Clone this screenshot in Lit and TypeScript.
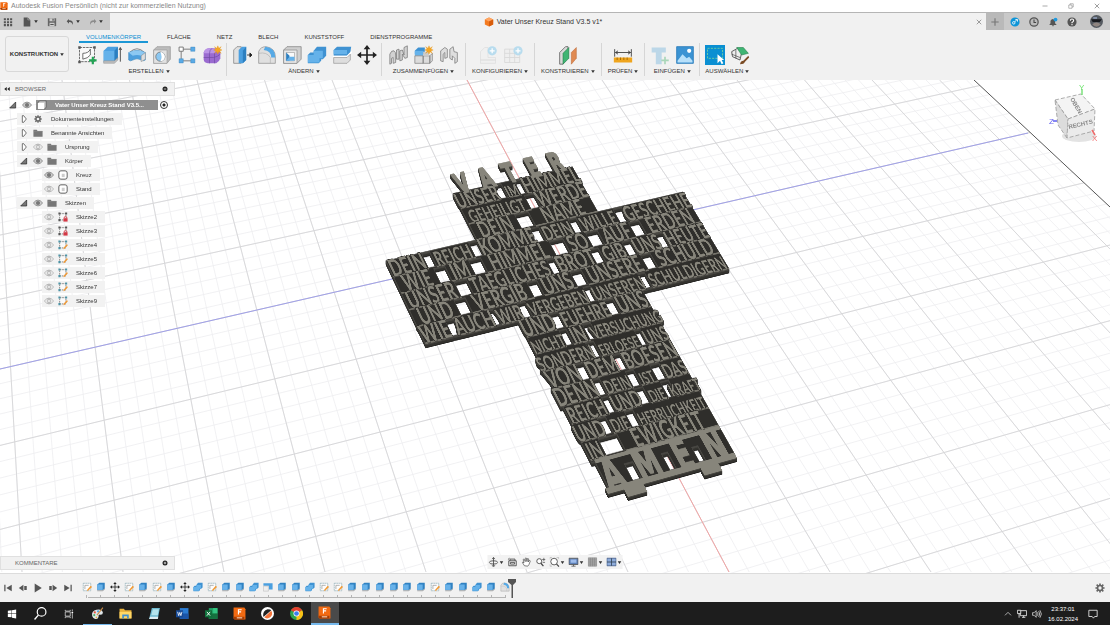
import { LitElement, html, svg, css } from "lit";
import { customElement } from "lit/decorators.js";
import { styleMap } from "lit/directives/style-map.js";

type Pt = [number, number];

const caret = html`<svg class="caret" viewBox="0 0 6 5"><path d="M0 .5h6L3 5z" fill="#333" /></svg>`;

const sunburst = (x: number, y: number) => svg`
  <path transform="translate(${x} ${y})" fill="#f5a623" stroke="#e8920c" stroke-width=".4"
    d="M0-5 1.2-2 4-4 2.2-1.2 5 0 2.2 1.2 4 4 1.2 2 0 5-1.2 2-4 4-2.2 1.2-5 0-2.2-1.2-4-4-1.2-2z" />`;

const glyphs: Record<string, unknown> = {
  sketch: svg`<path d="M3 3h18v17H3z" fill="#f8f8f8" stroke="#555" stroke-dasharray="3 1"/>
    <g fill="#555"><path d="M1.500 1.500h3v3h-3zM19.500 1.500h3v3h-3zM1.500 19h3v3h-3z"/></g>
    <path d="M7 17V10q7 0 9-5v7q-3 4-9 5z" fill="#fff" stroke="#555"/>
    <path d="M19 14v9M14.500 18.500h9" stroke="#23a455" stroke-width="2.600"/>`,
  extrude: svg`<path d="M2 7 7 2h12v14l-4 5H2z" fill="#4a9fe0"/><path d="M2 7h13v12H2z" fill="#65b2ea"/>
    <path d="M15 7l4-5v14l-4 4z" fill="#2c7fc0"/><path d="M2 19h13l4-4v3l-4 4H2z" fill="#bdbdbd" stroke="#888" stroke-width=".5"/>
    <path d="M22 20V4M20.500 6 22 3l1.500 3" stroke="#333" fill="none"/>`,
  revolve: svg`<path d="M3 9Q12 0 21 9" fill="none" stroke="#555" stroke-width=".8"/><path d="M2 9q10-5 20 0v9q-3 2-5 0-5-3-10 0-3 2-5 0z" fill="#4d9fdd" stroke="#2d7ab3" stroke-width=".6"/>
    <path d="M2 9q10-5 20 0l-5 4q-5-2-10 0z" fill="#8cc8f2"/><path d="M17 13l5-4v8l-5 3z" fill="#ddd" stroke="#888" stroke-width=".6"/>`,
  hole: svg`<path d="M2 6 6 2h16v15l-4 5H2z" fill="#bcbcbc" stroke="#888" stroke-width=".7"/><path d="M2 6h16v16H2z" fill="#e2e2e2" stroke="#999" stroke-width=".7"/>
    <circle cx="10" cy="14" r="5.500" fill="#8cc8f2" stroke="#777"/><path d="M10 8.500a5.500 5.500 0 0 1 0 11q3-5 0-11z" fill="#fff"/>`,
  pattern: svg`<path d="M5 5v14h14M5 5h14" fill="none" stroke="#666"/><g fill="#5aabe6" stroke="#3781b8" stroke-width=".5">
    <path d="M16.500 2.500h5v5h-5zM16.500 16.500h5v5h-5zM2.500 16.500h5v5h-5z"/></g><path d="M2.500 2.500h5v5h-5z" fill="#fff" stroke="#666"/>`,
  form: svg`<path d="M2 9q1-4 6-5h8q5 1 6 5v7q-1 4-5 6H7q-5-1-5-5z" fill="#9a6bd0"/><path d="M2 9q1-4 6-5h8q3 1 4 3l-6 3H3z" fill="#bb94e6"/>
    <path d="M12 4q-3 2-3 6v12M2 15h12q5-1 8-4M15 10v12" fill="none" stroke="#704aa3" stroke-width=".8"/>${sunburst(19, 6)}`,
  press: svg`<path d="M2 6 6 2h5v20H2z" fill="#e0e0e0" stroke="#777" stroke-width=".8"/><path d="M8 6l4-4h5v16l-4 4H8z" fill="#4a9fe0"/><path d="M13 7l4-5v16l-4 4z" fill="#2c7fc0"/>
    <path d="M18 12h5M21.500 9.500 24 12l-2.500 2.500z" stroke="#222" fill="#222"/>`,
  fillet: svg`<path d="M2 22V8q2-6 9-6 11 2 11 12v8z" fill="#e0e0e0" stroke="#888" stroke-width=".8"/><path d="M10 2q12 1 12 13h-5Q17 7 8 6z" fill="#56a9e5"/><path d="M2 10q10-2 14 5v7" fill="none" stroke="#aaa" stroke-width=".7"/>`,
  shell: svg`<path d="M2 6 6 2h17v15l-5 5H2z" fill="#cfcfcf" stroke="#777" stroke-width=".8"/><path d="M2 6h16v16H2z" fill="#e9e9e9" stroke="#888" stroke-width=".8"/>
    <path d="M5 9h10v10H5z" fill="#fafafa" stroke="#888" stroke-width=".6"/><path d="M5 9l4 4v6H5z" fill="#2c7fc0"/><path d="M5 19l4-5h6v5z" fill="#65b2ea"/>`,
  combine: svg`<path d="M8 7l4-5h11v11l-4 4h-2v2l-3 3H1V12l3-3h4z" fill="#3f92d2"/><path d="M8 7h11v9h-4v5H1v-9h7z" fill="#65b2ea"/>`,
  split: svg`<path d="M2 6l4-4h17l-1 7-4 4H2z" fill="#3f92d2"/><path d="M2 6h16v5H2z" fill="#65b2ea"/><path d="M1 14h17l6-6" stroke="#fff" stroke-width="2" fill="none"/>
    <path d="M2 15h16l4-4v7l-4 4H2z" fill="#dedede" stroke="#888" stroke-width=".7"/>`,
  move: svg`<path d="M12 3v18M3 12h18" stroke="#222" stroke-width="2"/><path d="M12 0l4 5H8zM12 24l4-5H8zM0 12l5-4v8zM24 12l-5-4v8z" fill="#222"/>`,
  joint: svg`<g fill="#d2d2d2" stroke="#777" stroke-width=".9"><path d="M1 23V11q2-5 5-4 2 1 2 5v9l-3 1v-7l-2 1v6z"/><path d="M9 17V6l3-1v12zM13 19V7l3-1 2 6V3l4-2v14l-3 1-3-5v7z"/></g>`,
  newcomp: svg`<path d="M1 7l4-4h8v8H1z" fill="#3f92d2"/><path d="M1 7h10v6H1z" fill="#65b2ea"/><path d="M1 13h10v9H1zM11 13h8v9h-8zM19 13l3-3v9l-3 3z" fill="#dcdcdc" stroke="#777" stroke-width=".8"/><path d="M11 8h7v5h-7z" fill="#ccc"/>${sunburst(18, 6)}`,
  rigid: svg`<g fill="#dedede" stroke="#777" stroke-width=".9"><path d="M2 19V7l5-4 3 2v10l-3 1V9l-2 2v9z"/><path d="M13 16V5l4-3 1 6 4 1v11l-3 2v-6l-3-3v5z"/></g>`,
  config1: svg`<g opacity=".3"><path d="M3 22V8l5-5h4v12h9v7z" fill="#eee" stroke="#bbb"/><path d="M3 18h18" stroke="#999"/></g><circle cx="17" cy="7" r="5.500" fill="#b8dcee"/><path d="M17 4v6M14 7h6" stroke="#fff" stroke-width="1.500"/>`,
  config2: svg`<g opacity=".35"><path d="M2 5h18v16H2zM2 10h18M8 5v16M14 5v16M2 15h18" fill="#eee" stroke="#aaa"/></g><circle cx="18" cy="7" r="5.500" fill="#b8dcee"/><path d="M18 4v6M15 7h6" stroke="#fff" stroke-width="1.500"/>`,
  plane: svg`<path d="M2 9l7-7h3v13l-6 8H2z" fill="#d9d9d9" stroke="#555" stroke-width=".9"/><path d="M6 10l7-7v13l-7 7z" fill="#3fb573" stroke="#267e4c" stroke-width=".7"/><path d="M16 9l6-6v13l-6 7z" fill="#e08a52" stroke="#b7632e" stroke-width=".6"/>`,
  measure: svg`<path d="M2 5v9M22 5v9M3 9h18M6 7 3 9l3 2M18 7l3 2-3 2" fill="none" stroke="#333"/><path d="M1 15h22v6H1z" fill="#efa51e"/><path d="M5 15v3M9 15v3M13 15v3M17 15v3" stroke="#9c6400"/>`,
  insert: svg`<g opacity=".5"><path d="M2 3h17v6h-5v14H7V9H2z" fill="#89bfe0"/><path d="M18 14v9M13.500 18.500h9" stroke="#64bd82" stroke-width="2"/></g>`,
  picture: svg`<path d="M2 2h20v20H2z" fill="#3b93d3" stroke="#2b7cb9"/><path d="M3 19l6-8 5 5 3-2 4 5v2H3z" fill="#b7e0fa"/><circle cx="17" cy="7" r="2.500" fill="#fff"/>`,
  select: svg`<path d="M0 0h24v24H0z" fill="#0a8fd2"/><path d="M3 4h18v12H3z" fill="none" stroke="#7ad49b" stroke-dasharray="2.500 1.500"/><path d="M15 11v11l3-3 2 4 2-1-2-4h3z" fill="#fff"/>`,
  paint: svg`<path d="M2 8l7-4 5 5-2 9-9-4z" fill="#eee" stroke="#444"/><path d="M8 3h8l6 7-8 2z" fill="#3fb573" stroke="#267e4c" stroke-width=".7"/><path d="M2 11l10 4M7 6v10" stroke="#444" stroke-width=".8"/><path d="M22 13l-6 6q-3 0-4 4 5 0 6-3l5-5z" fill="#7a4b25"/>`,
  grid: svg`<g fill="#555"><path d="M2 3h5v5H2zM9.500 3h5v5h-5zM17 3h5v5h-5zM2 10h5v5H2zM9.500 10h5v5h-5zM17 10h5v5h-5zM2 17h5v5H2zM9.500 17h5v5h-5zM17 17h5v5h-5z"/></g>`,
  file: svg`<path d="M4 1h10l6 6v16H4z" fill="#555"/><path d="M14 1v6h6" fill="none" stroke="#ddd"/>`,
  save: svg`<path d="M2 3h20v19H2z" fill="#666"/><path d="M6 3h12v7H6zM6 14h12v8H6z" fill="#ccc"/><path d="M13 4h3v5h-3zM8 17h8v2H8z" fill="#555"/>`,
  undo: svg`<path d="M9 3 2 10l7 7v-5q9-1 11 9 4-14-11-14z" fill="#555"/>`,
  redo: svg`<path d="M15 3l7 7-7 7v-5Q6 11 4 21 0 7 15 7z" fill="#8c8c8c"/>`,
  cube: svg`<path d="M12 1l10 5v12l-10 5L2 18V6z" fill="#f47b20"/><path d="M12 1l10 5-10 5L2 6z" fill="#ffa562"/><path d="M12 11l10-5v12l-10 5z" fill="#d75c0b"/>`,
  fusion: svg`<path d="M1 1h20l2 3v19H3l-2-2z" fill="#f26a12"/><path d="M1 18h20v5H3l-2-2z" fill="#a53c03"/><path d="M9 14V4h7v2h-5v2h4v2h-4v4z" fill="#fff"/><path d="M7 19h10v2H7z" fill="#ffd9bd"/>`,
  eye: svg`<path d="M1 12q11-14 22 0-11 14-22 0z" fill="#ccc" stroke="#777" stroke-width="1.800"/><circle cx="12" cy="12" r="5" fill="#777"/>`,
  eyeoff: svg`<path d="M1 12q11-14 22 0-11 14-22 0z" fill="#f6f6f6" stroke="#999" stroke-width="1.600"/><circle cx="12" cy="12" r="4.500" fill="none" stroke="#999" stroke-width="1.600"/><path d="M12 5v14" stroke="#999"/>`,
  folder: svg`<path d="M1 4h8l2 3h12v14H1z" fill="#777"/><path d="M1 8h22" stroke="#999"/>`,
  gear: svg`<path d="M12 1v22M1 12h22M4 4l16 16M20 4 4 20" stroke="#666" stroke-width="4"/><circle cx="12" cy="12" r="8" fill="#666"/><circle cx="12" cy="12" r="4" fill="#f2f2f2"/>`,
  open: svg`<path d="M20 3v18H2z" fill="#777" stroke="#222" stroke-width="2"/>`,
  closed: svg`<path d="M7 2v20h4l8-10-8-10z" fill="#fff" stroke="#333" stroke-width="2"/>`,
  body: svg`<rect x="2" y="2" width="20" height="20" rx="5" fill="#fff" stroke="#444" stroke-width="2"/><path d="M9 9h7v8H9z" fill="#ccc"/>`,
  comp: svg`<path d="M2 7l4-5h16v15l-4 5H2z" fill="#c9c9c9" stroke="#444" stroke-width="1.500"/><path d="M2 7h15v15H2z" fill="#fff"/>`,
  sk: svg`<path d="M4 4h15v15H4z" fill="#fafafa" stroke="#555" stroke-width="1.600" stroke-dasharray="4 2"/><g fill="#4c93a6"><path d="M1 1h5v5H1zM17 1h5v5h-5zM1 17h5v5H1z"/></g><path d="M13 22l1-4 7-8 3 2-8 9z" fill="#f29a35"/>`,
  sklock: svg`<path d="M4 4h15v15H4z" fill="#fafafa" stroke="#555" stroke-width="1.600" stroke-dasharray="4 2"/><g fill="#555"><path d="M1 1h5v5H1zM17 1h5v5h-5zM1 17h5v5H1z"/></g><path d="M13 15h10v8H13z" fill="#d43845"/><path d="M15 15v-3q3-3 6 0v3" fill="none" stroke="#d43845" stroke-width="2"/>`,
  tsketch: svg`<path d="M3 3h18v18H3z" fill="#fcfcfc" stroke="#7fa0ac" stroke-width="1.500" stroke-dasharray="4 1"/><path d="M7 17V8h9" fill="none" stroke="#888" stroke-width="1.500"/><path d="M12 22l1-4 8-9 3 3-8 8z" fill="#f29a35"/>`,
  textrude: svg`<path d="M3 6l5-4h13v14l-4 4H3z" fill="#3182c2"/><path d="M3 6h13v13H3z" fill="#68b2ea"/><path d="M3 20h13l5-5v3l-5 4H3z" fill="#aaa"/>`,
  tshell: svg`<path d="M1 3h22v15h-9V9H1z" fill="#4a9fe0"/><path d="M1 10h12v12H1z" fill="#eee" stroke="#aaa"/>`,
  first: svg`<path d="M3 4h3v16H3zM21 4v16L8 12z" fill="#555"/>`,
  prev: svg`<path d="M2 12 13 4v16zM15 7h6v10h-6z" fill="#555"/>`,
  play: svg`<path d="M4 1l17 11L4 23z" fill="#555"/>`,
  next: svg`<path d="M22 12 11 4v16zM3 7h6v10H3z" fill="#555"/>`,
  last: svg`<path d="M18 4h3v16h-3zM3 4v16l13-8z" fill="#555"/>`,
  orbit: svg`<path d="M12 2v20M9 5l3-4 3 4" stroke="#444" stroke-width="2" fill="none"/><ellipse cx="12" cy="13" rx="10" ry="4" fill="none" stroke="#444" stroke-width="2"/><path d="M8 20l4 3 4-3" fill="none" stroke="#444" stroke-width="2"/>`,
  look: svg`<path d="M3 9h18v12H3zM6 9V5h12v4M7 13h10v4H7z" fill="#eee" stroke="#444" stroke-width="2"/><path d="M1 6l4-3" stroke="#444" stroke-width="2"/>`,
  hand: svg`<path d="M7 21 2 13q1-2 4 1L4 6q2-2 3 0l2 5V3q2-2 3 0l1 8 1-7q3-1 3 1l-1 7 3-4q2 0 2 2l-3 8-3 4z" fill="#fff" stroke="#444" stroke-width="1.600"/>`,
  zoom: svg`<circle cx="9" cy="10" r="6" fill="#fff" stroke="#444" stroke-width="2"/><path d="M13 15l6 7" stroke="#444" stroke-width="3"/><path d="M20 2v8M16 6h8M17 13h6" stroke="#444" stroke-width="1.600"/>`,
  fit: svg`<circle cx="11" cy="11" r="8" fill="#fff" stroke="#444" stroke-width="2"/><path d="M17 17l6 6" stroke="#444" stroke-width="3"/><path d="M1 6V1h5M17 1h5v4M1 17v5h5" stroke="#888" fill="none"/>`,
  monitor: svg`<path d="M1 3h22v15H1z" fill="#5d7fb5" stroke="#555" stroke-width="2"/><path d="M5 6h14v8H5z" fill="#9ebcec"/><path d="M7 22h10M12 18v4" stroke="#555" stroke-width="2"/>`,
  gridset: svg`<path d="M2 2h20v20H2z" fill="#aaa" stroke="#666"/><path d="M2 7h20M2 12h20M2 17h20M7 2v20M12 2v20M17 2v20" stroke="#777"/>`,
  views: svg`<path d="M1 3h22v18H1z" fill="#8eacdb" stroke="#465f8c" stroke-width="2"/><path d="M12 3v18M1 12h22" stroke="#345" stroke-width="2"/>`,
  ext: svg`<circle cx="12" cy="12" r="11" fill="#0d95d8"/><circle cx="9" cy="14" r="3" fill="none" stroke="#fff" stroke-width="2"/><path d="M13 6h5v5M11 12l5-5" stroke="#fff" stroke-width="2" fill="none"/>`,
  clock: svg`<circle cx="12" cy="12" r="10" fill="#bbb" stroke="#555" stroke-width="3"/><path d="M12 6v7h5" fill="none" stroke="#444" stroke-width="2.500"/>`,
  bell: svg`<path d="M3 19l3-4V9q5-9 11 0v6l4 4zM9 20h6l-3 3z" fill="#555"/><circle cx="18" cy="6" r="4.500" fill="#1c9ae0"/>`,
  help: svg`<circle cx="12" cy="12" r="11" fill="#555"/><path d="M8 9q0-4 4-4t4 4q0 2-4 4v2M12 17v3" fill="none" stroke="#fff" stroke-width="2.500"/>`,
  avatar: svg`<circle cx="12" cy="12" r="12" fill="#555a60"/><path d="M2 8h20l-4 5H5z" fill="#17191d"/><path d="M4 17q8-6 16 0-8 9-16 0z" fill="#8f8580"/><path d="M6 4h7v3H6z" fill="#8d9cb8"/>`,
  win: svg`<path d="M2 4l9-1v8H2zM12 3l10-2v10H12zM2 12h9v8l-9-1zM12 12h10v11l-10-2z" fill="#fff"/>`,
  search: svg`<circle cx="14" cy="9" r="8" fill="none" stroke="#fff" stroke-width="2.200"/><path d="M8 15l-7 8" stroke="#fff" stroke-width="2.500"/>`,
  task: svg`<path d="M3 7h12v10H3zM3 2v3h12V2M3 22v-3h12v3M20 1v5M20 10v13" fill="none" stroke="#ddd" stroke-width="1.800"/><path d="M18 7h4v3h-4z" fill="#fff"/>`,
  palette: svg`<path d="M2 15Q1 7 10 5q10-2 12 5 0 5-6 4-3 1-2 4-1 5-6 4-5-1-6-7z" fill="#dfe6ea"/><circle cx="7" cy="10" r="2" fill="#e5533c"/><circle cx="13" cy="8" r="2" fill="#4aa3df"/><circle cx="6" cy="15" r="2" fill="#54b56b"/><circle cx="10" cy="19" r="1.600" fill="#e2b33b"/><path d="M22 1 11 15" stroke="#c98c48" stroke-width="2"/>`,
  explorer: svg`<path d="M1 3h8l2 3h12v15H1z" fill="#e9b13b"/><path d="M1 9h22v12H1z" fill="#ffd766"/><path d="M6 14h12v7h-3v-4H9v4H6z" fill="#3f8ed0"/>`,
  note: svg`<path d="M7 2h15l-4 20H2z" fill="#6eb9cf"/><path d="M9 4h11l-2 11H6z" fill="#b4e3ec"/><path d="M2 22h16l1-4H4z" fill="#dfeef2"/>`,
  word: svg`<path d="M7 2h16v20H7z" fill="#2b7cd3"/><path d="M7 12h16v10H7z" fill="#1b55a8"/><path d="M0 6h13v13H0z" fill="#174a96"/><path d="M3 9l2 7 2-6 2 6 2-7" fill="none" stroke="#fff" stroke-width="1.500"/>`,
  excel: svg`<path d="M7 2h16v20H7z" fill="#22a366"/><path d="M15 2h8v10h-8z" fill="#33c481"/><path d="M7 12h16v10H7z" fill="#15713f"/><path d="M0 6h13v13H0z" fill="#0f703b"/><path d="M3.500 9l6 7M9.500 9l-6 7" stroke="#fff" stroke-width="1.700"/>`,
  slicer: svg`<circle cx="12" cy="12" r="12" fill="#fff"/><path d="M4 17Q3 7 12 4q6 0 7 2L5 18z" fill="#222"/><path d="M19 7q4 7-2 12-6 4-11 0z" fill="#f4743b"/>`,
  chrome: svg`<circle cx="12" cy="12" r="12" fill="#2ea44f"/><path d="M12 12 1.600 6A12 12 0 0 1 22.400 6z" fill="#e4402f"/><path d="M12 12l10.400-6A12 12 0 0 1 12 24z" fill="#fbc116"/><circle cx="12" cy="12" r="5.500" fill="#fff"/><circle cx="12" cy="12" r="4.300" fill="#3b7ded"/>`,
  up: svg`<path d="M3 16l9-9 9 9" fill="none" stroke="#eee" stroke-width="2"/>`,
  net: svg`<path d="M8 4h15v12H8zM12 20h8M16 16v4" fill="none" stroke="#eee" stroke-width="2"/><path d="M1 3h8v8H1zM5 11v10" fill="#1d1d1d" stroke="#eee" stroke-width="2"/>`,
  sound: svg`<path d="M1 9h4l5-5v16l-5-5H1zM13 8q3 4 0 8M16 5q5 7 0 14M19 3q7 9 0 18" fill="none" stroke="#eee" stroke-width="1.700"/>`,
  notice: svg`<path d="M2 3h20v15h-6l-3 4-3-4H2z" fill="none" stroke="#eee" stroke-width="2"/>`,
  min: svg`<path d="M2 12h20" stroke="#777" stroke-width="2.500"/>`,
  restore: svg`<path d="M3 8h13v13H3zM8 8V3h13v13h-5" fill="none" stroke="#777" stroke-width="2"/>`,
  close: svg`<path d="M3 3l18 18M21 3 3 21" stroke="#666" stroke-width="2.500"/>`,
  plus: svg`<path d="M12 1v22M1 12h22" stroke="#777" stroke-width="3.500"/>`,
  dot: svg`<circle cx="12" cy="12" r="10" fill="#222"/><path d="M7 12h10" stroke="#eee" stroke-width="3"/>`,
  dotplus: svg`<circle cx="12" cy="12" r="10" fill="#222"/><path d="M7 12h10M12 7v10" stroke="#eee" stroke-width="3"/>`,
  rewind: svg`<path d="M11 4v16L1 12zM23 4v16l-10-8z" fill="#222"/>`,
};

const icon = (name: string, size = "i10") =>
  html`<svg class=${size} viewBox="0 0 24 24" aria-hidden="true">${glyphs[name]}</svg>`;
const iconButton = (name: string, label: string, size = "i10", cls = "") =>
  html`<button class=${cls} aria-label=${label} title=${label}>${icon(name, size)}</button>`;

/* Ground grid: column lines are spaced evenly on two horizontals, row lines by perspective. */
const colLine = (k: number): [Pt, Pt] => [[467 + 67.5 * k, 0], [729 + 101 * k, 492]];
const rowLine = (n: number): [Pt, Pt] => {
  const y = 289 + (73 * n) / (1 - 0.045 * n);
  const s = 0.2296 + 0.000166 * (y - 289);
  return [[0, y], [1400, y - 1400 * s]];
};
const gridLine = ([a, b]: [Pt, Pt], color: string, width: number) =>
  svg`<line x1=${a[0]} y1=${a[1]} x2=${b[0]} y2=${b[1]} stroke=${color} stroke-width=${width} />`;
const range = (from: number, to: number) => Array.from({ length: to - from + 1 }, (_, i) => from + i);

/* Projection of the model plane (source quad) on the viewport (target quad) as a CSS matrix3d. */
function projection(src: Pt[], dst: Pt[]): string {
  const m: number[][] = [];
  src.forEach(([x, y], i) => {
    const [u, v] = dst[i];
    m.push([x, y, 1, 0, 0, 0, -u * x, -u * y, u]);
    m.push([0, 0, 0, x, y, 1, -v * x, -v * y, v]);
  });
  for (let c = 0; c < 8; c++) {
    let p = c;
    for (let r = c + 1; r < 8; r++) if (Math.abs(m[r][c]) > Math.abs(m[p][c])) p = r;
    [m[c], m[p]] = [m[p], m[c]];
    for (let r = 0; r < 8; r++) {
      if (r === c) continue;
      const f = m[r][c] / m[c][c];
      for (let k = c; k < 9; k++) m[r][k] -= f * m[c][k];
    }
  }
  const [a, b, c, d, e, f, g, h] = m.map((row, i) => row[8] / row[i]);
  return `matrix3d(${[a, d, 0, g, b, e, 0, h, 0, 0, 1, 0, c, f, 0, 1].join(",")})`;
}

const SCALE = 3;
const TOP = 50;
const plane = (x: number, y: number): Pt => [x * SCALE, (y + TOP) * SCALE];
const modelMatrix = projection(
  [plane(0, 0), plane(300, 0), plane(89, 148), plane(211, 148)],
  [[386, 181], [683, 112], [608, 414], [737, 378]],
);

type Word = [string, number, number];
const verses: [number, Word[]][] = [
  [-3, [["UNSER", 89, 129], ["IM", 137, 150], ["HIMMEL", 157, 211]]],
  [-2, [["GEHEILIGT", 89, 152], ["WERDE", 162, 211]]],
  [-1, [["DEIN", 89, 134], ["NAME", 148, 211]]],
  [0, [["DEIN", 0, 34], ["REICH", 42, 80], ["KOMME", 90, 140], ["DEIN", 150, 180], ["WILLE", 188, 226], ["GESCHEHE", 235, 300]]],
  [1, [["WIE", 0, 38], ["IM", 49, 72], ["HIMMEL", 84, 152], ["SO", 166, 189], ["AUF", 201, 233], ["ERDEN", 244, 300]]],
  [2, [["UNSER", 0, 50], ["TAEGLICHES", 62, 141], ["BROT", 149, 184], ["GIB", 193, 217], ["UNS", 226, 251], ["HEUTE", 259, 300]]],
  [3, [["UND", 0, 42], ["VERGIB", 53, 113], ["UNS", 123, 156], ["UNSERE", 167, 227], ["SCHULD", 237, 300]]],
  [4, [["WIE", 0, 26], ["AUCH", 34, 66], ["WIR", 73, 95], ["VERGEBEN", 103, 160], ["UNSEREN", 167, 215], ["SCHULDIGERN", 222, 300]]],
  [5, [["UND", 89, 118], ["FUEHRE", 127, 172], ["UNS", 181, 211]]],
  [6, [["NICHT", 89, 119], ["IN", 126, 142], ["VERSUCHUNG", 150, 211]]],
  [7, [["SONDERN", 89, 136], ["ERLOESE", 144, 184], ["UNS", 190, 211]]],
  [8, [["VON", 89, 116], ["DEM", 127, 152], ["BOESEN", 161, 211]]],
  [9, [["DENN", 89, 123], ["DEIN", 132, 157], ["IST", 165, 181], ["DAS", 190, 211]]],
  [10, [["REICH", 89, 125], ["UND", 133, 156], ["DIE", 165, 182], ["KRAFT", 190, 211]]],
  [11, [["UND", 89, 112], ["DIE", 120, 138], ["HERRLICHKEIT", 146, 211]]],
  [12, [["IN", 89, 104], ["EWIGKEIT", 122, 211]]],
];

const holes = verses
  .map(([row, words]) =>
    words.slice(1).map((w, i) => `M${words[i][2]} ${row * 10 + 0.5}H${w[1]}V${row * 10 + 9.5}H${words[i][2]}Z`).join(""),
  ).join("");
const plate = `M89 -30H211V0H300V50H211V146H92V131H89V50H0V0H89Z${holes}M115 136h8v9h-8zM150 136h6v9h-6zM178 137h6v8h-6z`;

const verseWord = (row: number, [text, x0, x1]: Word) => {
  const size = Math.min(14, Math.max(9, Math.round((x1 - x0) / (text.length * 0.62))));
  return svg`<text class="verse" x=${(x0 + x1) / 2} y=${row * 10 + 9.8} font-size=${size}>${text}</text>`;
};

const model = html`
  <svg class="model" viewBox="0 -50 300 220" style=${styleMap({ transform: modelMatrix })} role="img" aria-label="Kreuz">
    <path d=${plate} fill="#2f2e2b" fill-rule="evenodd" stroke="#4b4a45" stroke-width=".5" />
    ${verses.map(([row, words]) => svg`
      ${words.map(([, a, b]) => svg`<path d="M${a} ${row * 10 + 9.8}H${b}" stroke="#77756c" stroke-width=".9" />`)}
      ${words.map((w) => verseWord(row, w))}`)}
    <path d="M89 145h122v3H89zM104 148h18v4h-18zM176 148h17v4h-17z" fill="#87857b" />
    <path d="M92 130h119v2H92z" fill="#87857b" />
    ${["V", "A", "T", "E", "R"].map((c, i) => svg`<text class="big" x=${102 + i * 24} y="-29" font-size="17">${c}</text>`)}
    ${["A", "M", "E", "N"].map((c, i) => svg`<text class="big" x=${[101, 134, 167, 198][i]} y="147" font-size="23">${c}</text>`)}
  </svg>`;

const createIcons: [string, string][] = [["sketch", "Skizze erstellen"], ["extrude", "Extrusion"], ["revolve", "Drehen"], ["hole", "Bohrung"], ["pattern", "Muster"], ["form", "Form erstellen"]];
const groups: { label: string; pad: string; icons: [string, string][] }[] = [
  { label: "ERSTELLEN", pad: "p2", icons: createIcons },
  { label: "ÄNDERN", pad: "p2", icons: [["press", "Drücken/Ziehen"], ["fillet", "Abrunden"], ["shell", "Schale"], ["combine", "Kombinieren"], ["split", "Teilen"], ["move", "Verschieben"]] },
  { label: "ZUSAMMENFÜGEN", pad: "p4", icons: [["joint", "Gelenk"], ["newcomp", "Neue Komponente"], ["rigid", "Starre Gruppe"]] },
  { label: "KONFIGURIEREN", pad: "p6", icons: [["config1", "Konfiguration"], ["config2", "Tabelle"]] },
  { label: "KONSTRUIEREN", pad: "p6", icons: [["plane", "Versatzebene"]] },
  { label: "PRÜFEN", pad: "p6", icons: [["measure", "Messen"]] },
  { label: "EINFÜGEN", pad: "p2", icons: [["insert", "Einfügen"], ["picture", "Ansichtsbereich"]] },
  { label: "AUSWÄHLEN", pad: "p2", icons: [["select", "Auswählen"], ["paint", "Auswahlfilter"]] },
];

const tree: [string, string, string[]][] = [
  ["Dokumenteinstellungen", "l1", ["closed", "gear"]],
  ["Benannte Ansichten", "l1", ["closed", "folder"]],
  ["Ursprung", "l1", ["closed", "eyeoff", "folder"]],
  ["Körper", "l1", ["open", "eye", "folder"]],
  ["Kreuz", "l2", ["eye", "body"]],
  ["Stand", "l2", ["eyeoff", "body"]],
  ["Skizzen", "l1", ["open", "eye", "folder"]],
  ["Skizze2", "l2", ["eyeoff", "sklock"]],
  ["Skizze3", "l2", ["eyeoff", "sklock"]],
  ...["4", "5", "6", "7", "9"].map((n): [string, string, string[]] => ["Skizze" + n, "l2", ["eyeoff", "sk"]]),
];

const kinds: Record<string, [string, string]> = {
  s: ["tsketch", "Skizze"], e: ["textrude", "Extrusion"], m: ["move", "Verschieben"],
  c: ["combine", "Kombinieren"], h: ["tshell", "Teilen"], f: ["fillet", "Abrunden"],
};
const steps = [..."semsesemcseecheecsseeeeeeseecef"];

@customElement("app-root")
export class AppRoot extends LitElement {
  static styles = css`
    :host { display: grid; grid-template-rows: 12px 18px 50px minmax(0, 1fr) 29px 23px; height: 100vh; overflow: hidden;
      font: 6px/8px "Liberation Sans", Arial, sans-serif; color: #333; background: #fff; }
    * { box-sizing: border-box; }
    button { font: inherit; color: inherit; background: none; border: 0; padding: 0; margin: 0; display: flex; align-items: center; justify-content: center; }
    svg { display: block; flex: none; }
    .i6 { width: 6px; height: 6px; } .i8 { width: 8px; height: 8px; } .i10 { width: 10px; height: 10px; }
    .i13 { width: 13px; height: 13px; } .i21 { width: 20px; height: 20px; }
    .caret { width: 4px; height: 3px; margin-left: 2px; }
    .title { display: flex; align-items: center; font-size: 7px; color: #888; gap: 3px; }
    .title .wc { margin-left: auto; display: flex; gap: 20px; padding-right: 10px; }
    .tabs { display: flex; background: #c9c9c9; border-top: 1px solid #b5b5b5; }
    .qat { width: 110px; display: flex; align-items: center; padding-left: 3px; gap: 9px; flex: none; }
    .doc { flex: 1; display: flex; align-items: center; background: #f1f1f1; font-size: 7px; padding-right: 4px; }
    .doc .name { flex: 1; display: flex; justify-content: center; align-items: center; gap: 3px; }
    .newtab { width: 18px; background: #b9b9b9; flex: none; }
    .acct { width: 106px; display: flex; align-items: center; gap: 9px; padding-left: 6px; flex: none; }
    .acct button:last-child { margin-left: 4px; }
    .ribbon { background: #f1f1f1; display: flex; }
    .ws { width: 64px; height: 36px; margin: 6px 3px 0 5px; border: 1px solid #d8d8d8; border-radius: 3px; font-weight: bold; flex: none; }
    .tools { flex: 1; min-width: 0; }
    .rtabs { display: flex; gap: 12px; padding: 2px 0 0 7px; height: 13px; }
    .rtabs button { padding: 0 7px; height: 11px; white-space: nowrap; border-bottom: 2px solid transparent; }
    .rtabs .on { color: #0a8fd2; border-color: #1c97d5; }
    .groups { display: flex; }
    .group { display: flex; flex-direction: column; align-items: center; height: 33px; border-right: 1px solid #d6d6d6; }
    .group:last-child { border: 0; }
    .p2 { padding: 0 2px; } .p4 { padding: 0 4px; } .p6 { padding: 0 6px; }
    .icons { display: flex; } .icons button { width: 25px; height: 24px; }
    .group .more { white-space: nowrap; height: 8px; }
    .view { position: relative; overflow: hidden; display: flex; flex-direction: column; background: #fff; }
    .ground { position: absolute; inset: 0; width: 100%; height: 100%; }
    .extrusion { position: absolute; inset: 0; filter: drop-shadow(0 1px 0 #45443f) drop-shadow(0 2px 0 #34332f) drop-shadow(0 1px 0 #262523); }
    .model { position: absolute; left: 0; top: 0; width: 900px; height: 660px; transform-origin: 0 0; overflow: visible; }
    .verse, .big { text-anchor: middle; font-weight: 900; fill: #87857b; paint-order: stroke; }
    .verse { font-family: Lato, "Open Sans", sans-serif; stroke: #2a2926; stroke-width: .7px; }
    .big { font-family: "DejaVu Sans", sans-serif; stroke: #87857b; stroke-width: 1px; }
    .viewcube { position: absolute; right: 5px; top: 2px; width: 56px; height: 68px; font-family: "Liberation Sans", sans-serif; }
    .bar { position: relative; width: 175px; height: 14px; background: #f1f1f1; border: 1px solid #e0e0e0; display: flex; align-items: center; gap: 5px; padding: 0 6px 0 3px; color: #666; }
    .bar .end { margin-left: auto; }
    .browser { margin-top: 2px; }
    .tree { position: relative; list-style: none; margin: 2px 0 0; padding: 0; display: flex; flex-direction: column; align-items: flex-start; }
    .tree li { height: 14px; display: flex; align-items: center; white-space: nowrap; }
    .cell { width: 14px; display: flex; justify-content: center; align-self: stretch; align-items: center; flex: none; }
    .row { display: flex; align-items: center; height: 12px; background: #f2f2f2; padding-right: 8px; }
    .row .text { margin-left: 6px; }
    .l0 { padding-left: 6px; } .l1 { padding-left: 17px; } .l2 { padding-left: 42px; }
    .root { display: flex; align-items: center; height: 10px; width: 122px; margin-left: 2px; background: #8f8f8f; color: #fff; font-weight: bold; padding-left: 1px; gap: 8px; }
    .radio { appearance: none; width: 8px; height: 8px; margin: 0 0 0 2px; border: 1px solid #333; border-radius: 50%; background: radial-gradient(circle, #222 0 1px, #fff 2px); }
    .bottom { position: relative; margin-top: auto; display: flex; align-items: flex-end; height: 18px; padding-bottom: 3px; }
    .bottom .bar { padding-left: 14px; }
    .nav { position: absolute; left: 50%; top: 0; transform: translateX(-50%); display: flex; align-items: center; height: 14px; background: #f2f2f2; gap: 4px; padding: 0 1px; }
    .nav .caret { margin-left: 1px; }
    .timeline { background: #f1f1f1; border-top: 1px solid #dcdcdc; display: flex; align-items: center; }
    .play { display: flex; gap: 5px; padding-left: 3px; width: 80px; flex: none; }
    .steps { width: 432px; display: grid; grid-template-columns: repeat(31, 1fr); position: relative; height: 20px; }
    .steps::after { content: ""; position: absolute; left: 8px; right: 7px; bottom: 0; height: 1px; background: #b5b5b5; }
    .steps button { flex-direction: column; gap: 3px; justify-content: flex-start; padding-top: 4px; }
    .steps button::after { content: ""; width: 1px; height: 3px; background: #b5b5b5; }
    .marker { width: 8px; height: 20px; margin-left: -4px; }
    .settings { margin-left: auto; padding-right: 5px; }
    .task { background: #1d1d1d; color: #fff; display: flex; align-items: center; }
    .apps { width: 341px; margin-left: -2px; display: grid; grid-template-columns: repeat(12, 1fr); height: 23px; }
    .apps .run { border-bottom: 1px solid #76b9ed; } .apps .active { background: #4a4a4a; border-bottom: 2px solid #76b9ed; }
    .tray { margin-left: auto; display: flex; align-items: center; gap: 5px; padding-right: 12px; }
    .time { text-align: center; line-height: 10px; margin: 0 5px 0 1px; }
  `;

  render() {
    return html`
      <header class="title">${icon("fusion", "i8")}<span>Autodesk Fusion Persönlich (nicht zur kommerziellen Nutzung)</span>
        <span class="wc">${iconButton("min", "Minimieren", "i6")}${iconButton("restore", "Verkleinern", "i6")}${iconButton("close", "Schließen", "i6")}</span>
      </header>
      <div class="tabs">
        <div class="qat">
          ${iconButton("grid", "Datengruppe")}
          <button aria-label="Datei">${icon("file")}${caret}</button>
          ${iconButton("save", "Speichern")}
          <button aria-label="Rückgängig">${icon("undo", "i8")}${caret}</button>
          <button aria-label="Wiederholen">${icon("redo", "i8")}${caret}</button>
        </div>
        <div class="doc"><span class="name">${icon("cube")}<span>Vater Unser Kreuz Stand V3.5 v1*</span></span>${iconButton("close", "Tab schließen", "i6")}</div>
        ${iconButton("plus", "Neuer Tab", "i8", "newtab")}
        <div class="acct">
          ${iconButton("ext", "Erweiterungen")}${iconButton("clock", "Auftragsstatus")}${iconButton("bell", "Benachrichtigungen")}${iconButton("help", "Hilfe")}${iconButton("avatar", "Konto", "i13")}
        </div>
      </div>
      <div class="ribbon">
        <button class="ws">KONSTRUKTION${caret}</button>
        <div class="tools">
          <nav class="rtabs">
            ${["VOLUMENKÖRPER", "FLÄCHE", "NETZ", "BLECH", "KUNSTSTOFF", "DIENSTPROGRAMME"].map((t, i) => html`<button class=${i ? "" : "on"}>${t}</button>`)}
          </nav>
          <div class="groups">
            ${groups.map((g) => html`<div class="group ${g.pad}">
              <div class="icons">${g.icons.map(([n, l]) => iconButton(n, l, "i21"))}</div>
              <button class="more">${g.label}${caret}</button>
            </div>`)}
          </div>
        </div>
      </div>
      <main class="view">
        <svg class="ground" viewBox="0 0 1110 493" preserveAspectRatio="xMinYMin slice" aria-hidden="true">
          <clipPath id="floor"><path d="M0 0H974L1500 493H0Z" /></clipPath>
          <g clip-path="url(#floor)">
            ${range(-50, 37).map((k) => gridLine(colLine(k / 5), "#eeeef0", 0.8))}
            ${range(-45, 45).map((n) => gridLine(rowLine(n / 5), "#eeeef0", 0.8))}
            ${range(-10, 7).map((k) => gridLine(colLine(k), "#d6d6d8", 0.9))}
            ${range(-9, 9).map((n) => gridLine(rowLine(n), "#d6d6d8", 0.9))}
            ${gridLine(colLine(0), "#f3a5a5", 1)}
            ${gridLine([[0, 289], [1028, 53]], "#a0a0e8", 1)}
          </g>
          ${gridLine([[974, 0], [1110, 127]], "#555", 1)}
        </svg>
        <div class="extrusion">${model}</div>
        <svg class="viewcube" viewBox="0 0 56 68" role="img" aria-label="Ansichtswürfel">
          <ellipse cx="30" cy="54" rx="17" ry="6" fill="#e3e3e3" />
          <path d="M6 18 32 12 46 27 19 37z" fill="#f4f4f4" stroke="#999" stroke-width=".8" stroke-dasharray="4 2" />
          <path d="M6 18 19 37 18 56 9 43z" fill="#dcdcdc" stroke="#999" stroke-width=".8" stroke-dasharray="4 2" />
          <path d="M19 37 46 27 45 49 18 56z" fill="#ebebeb" stroke="#999" stroke-width=".8" stroke-dasharray="4 2" />
          <text x="20" y="47" transform="rotate(-13 20 47)" font-size="6" font-weight="bold" fill="#888">RECHTS</text>
          <text x="21" y="17" transform="rotate(60 21 17)" font-size="6" font-weight="bold" fill="#888">OBEN</text>
          <path d="M33 13V7" stroke="#7be07b" stroke-width="1.500" /><path d="M4 39h4" stroke="#5c5cf0" stroke-width="1.500" /><path d="M43 48l3 5" stroke="#f06a6a" stroke-width="1.500" />
          <text x="30" y="8" font-size="8" fill="#6be36b">Y</text><text x="0" y="42" font-size="8" fill="#6565ee">Z</text><text x="43" y="59" font-size="8" fill="#f27474">X</text>
        </svg>
        <div class="bar browser">${iconButton("rewind", "Einklappen", "i6")}<span>BROWSER</span>${iconButton("dot", "Ausblenden", "i6", "end")}</div>
        <ul class="tree">
          <li class="l0"><span class="cell">${icon("open", "i8")}</span><span class="cell">${icon("eye")}</span>
            <span class="root">${icon("comp")}<span>Vater Unser Kreuz Stand V3.5...</span></span>
            <input class="radio" type="radio" checked aria-label="Komponente aktivieren" /></li>
          ${tree.map(([label, level, icons]) => html`<li class=${level}><span class="row">
            ${icons.map((n) => html`<span class="cell">${icon(n, n === "closed" || n === "open" || n === "gear" ? "i8" : "i10")}</span>`)}<span class="text">${label}</span></span></li>`)}
        </ul>
        <div class="bottom">
          <div class="bar"><span>KOMMENTARE</span>${iconButton("dotplus", "Kommentar hinzufügen", "i6", "end")}</div>
          <div class="nav">
            <button aria-label="Orbit">${icon("orbit")}${caret}</button>${iconButton("look", "Ansehen")}${iconButton("hand", "Pan")}${iconButton("zoom", "Zoom")}
            <button aria-label="Einpassen">${icon("fit")}${caret}</button><button aria-label="Anzeige">${icon("monitor")}${caret}</button>
            <button aria-label="Raster">${icon("gridset")}${caret}</button><button aria-label="Ansichtsfenster">${icon("views")}${caret}</button>
          </div>
        </div>
      </main>
      <div class="timeline">
        <div class="play">${iconButton("first", "Zum Anfang")}${iconButton("prev", "Schritt zurück")}${iconButton("play", "Abspielen")}${iconButton("next", "Schritt vor")}${iconButton("last", "Zum Ende")}</div>
        <div class="steps">${steps.map((s) => iconButton(kinds[s][0], kinds[s][1]))}</div>
        <svg class="marker" viewBox="0 0 8 20"><path d="M0 1h8v3L5 7v13H3.500V7L0 4z" fill="#555" /></svg>
        ${iconButton("gear", "Einstellungen", "i10", "settings")}
      </div>
      <footer class="task">
        <div class="apps">
          ${[["win", "Start", "i10"], ["search", "Suche", "i13"], ["task", "Taskansicht", "i10"], ["palette", "Paint", "i13", "run"], ["explorer", "Explorer", "i13"], ["note", "Editor", "i13"], ["word", "Word", "i13"], ["excel", "Excel", "i13"], ["fusion", "Fusion", "i13"], ["slicer", "Slicer", "i13"], ["chrome", "Chrome", "i13"], ["fusion", "Autodesk Fusion", "i13", "active"]].map(([n, l, s, c]) => iconButton(n, l, s, c ?? ""))}
        </div>
        <div class="tray">${iconButton("up", "Ausgeblendete Symbole", "i8")}${iconButton("net", "Netzwerk")}${iconButton("sound", "Lautstärke")}
          <div class="time">23:37:01<br />16.02.2024</div>${iconButton("notice", "Info-Center")}</div>
      </footer>
    `;
  }
}
